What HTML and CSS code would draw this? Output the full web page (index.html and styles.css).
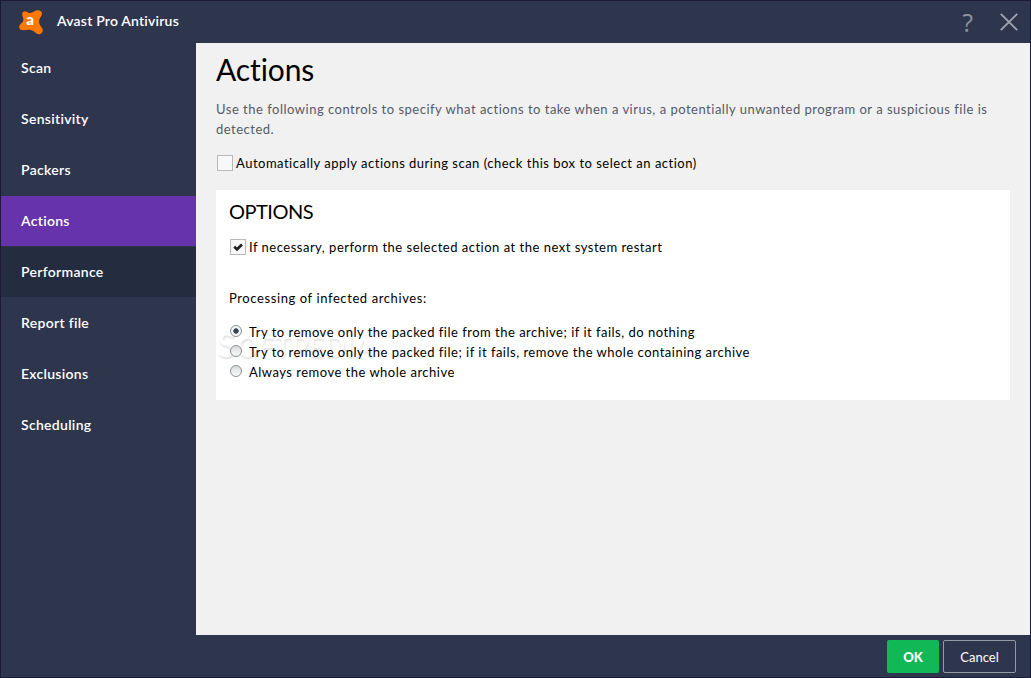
FILE: index.html
```
<!DOCTYPE html>
<html lang="en">

<head>
  <meta charset="utf-8">
  <title>Avast Pro Antivirus</title>
  <link rel="stylesheet" href="styles.css">
</head>

<body>
  <div class="window">
    <header class="titlebar">
      <svg class="logo" width="26" height="26" viewBox="0 0 26 26">
        <path d="M8.800 2.800C11 4.600 13.500 4.300 16.500 2.300C18.500 .8 21.500 .6 23.200 2.500C24.800 4.600 23.800 6.500 22.300 8.500C20.300 11.500 20.600 15 23.500 18.300C26 21 24.600 25 21.200 25.200C18 25.300 17 22.200 13.500 21.200C10.500 20.300 8.500 21 5.500 21.300C1.500 21.600 .2 18 2 15.800C4 13.600 5.800 12.500 5.300 9.500C5 7.500 3.800 6.200 4.300 4.200C4.900 2 7.200 1.600 8.800 2.800Z" fill="#ff7800"/>
        <text class="logo-letter" x="8.300" y="16">a</text>
      </svg>
      <span class="app-name">Avast Pro Antivirus</span>
      <span class="help">?</span>
      <svg class="close" width="18" height="18" viewBox="0 0 18 18">
        <path d="M.8 .8L17.200 17.200M17.200 .8L.8 17.200" stroke="#a1a5b0" stroke-width="1.800"/>
      </svg>
    </header>

    <div class="main">
      <nav class="sidebar">
        <a class="item">Scan</a>
        <a class="item">Sensitivity</a>
        <a class="item">Packers</a>
        <a class="item active">Actions</a>
        <a class="item hover">Performance</a>
        <a class="item">Report file</a>
        <a class="item">Exclusions</a>
        <a class="item">Scheduling</a>
      </nav>

      <section class="content">
        <h1>Actions</h1>
        <p class="intro">Use the following controls to specify what actions to take when a virus, a potentially unwanted program or a suspicious file is<br>detected.</p>
        <label class="check auto"><span class="box"></span>Automatically apply actions during scan (check this box to select an action)</label>

        <div class="panel">
          <h2>OPTIONS</h2>
          <label class="check"><span class="box">
            <svg width="14" height="14" viewBox="0 0 14 14"><path d="M3.200 6.800L6 9.300L11 4.500" fill="none" stroke="#222" stroke-width="2.700"/></svg>
          </span>If necessary, perform the selected action at the next system restart</label>
          <p class="group-title">Processing of infected archives:</p>
          <div class="radios">
            <label class="radio"><span class="dot on"></span>Try to remove only the packed file from the archive; if it fails, do nothing</label>
            <label class="radio"><span class="dot"></span>Try to remove only the packed file; if it fails, remove the whole containing archive</label>
            <label class="radio"><span class="dot"></span>Always remove the whole archive</label>
          </div>
          <div class="watermark">S<small>OFTPEDIA</small></div>
        </div>
      </section>
    </div>

    <footer class="footer">
      <button class="btn ok">OK</button>
      <button class="btn cancel">Cancel</button>
    </footer>
  </div>
</body>

</html>
```
FILE: styles.css
```
* {
  box-sizing: border-box;
}

body {
  margin: 0;
  font-family: Lato, "Open Sans", sans-serif;
  font-size: 13px;
  color: #000;
}

.window {
  display: flex;
  flex-direction: column;
  width: 1031px;
  height: 678px;
  background: #2e364e;
  border: 1px solid #1b1b38;
}

/* title bar */
.titlebar {
  display: flex;
  align-items: center;
  flex: none;
  height: 42px;
  padding: 0 12px 0 17px;
}

.logo {
  margin-right: 13px;
}

.logo-letter {
  font-size: 15px;
  font-weight: 900;
  fill: #fff;
}

.app-name {
  flex: 1;
  padding-bottom: 3px;
  color: #fff;
  font-size: 14px;
  font-weight: 600;
  letter-spacing: 0.2px;
}

.help {
  margin-right: 27px;
  color: #8d92a0;
  font-family: "Open Sans", sans-serif;
  font-size: 25px;
  line-height: 42px;
}

.main {
  display: flex;
  flex: 1;
  min-height: 0;
}

/* left menu */
.sidebar {
  display: flex;
  flex-direction: column;
  gap: 1px;
  width: 195px;
}

.item {
  height: 50px;
  padding-left: 20px;
  line-height: 50px;
  color: #fff;
  font-size: 14px;
  font-weight: 600;
  letter-spacing: 0.3px;
}

.active {
  background: #6633ac;
}

.hover {
  background: #242c3f;
}

/* page */
.content {
  flex: 1;
  padding: 10px 20px 0;
  background: #f1f1f1;
}

h1 {
  margin: 0;
  font-size: 30px;
  font-weight: 400;
  line-height: 32px;
  letter-spacing: -0.1px;
}

.intro {
  margin: 14px 0 0;
  color: #555a68;
  line-height: 20px;
  white-space: nowrap;
  letter-spacing: 0.5px;
}

.check {
  display: flex;
  align-items: center;
  height: 16px;
  padding-left: 1px;
  gap: 3px;
  white-space: nowrap;
  letter-spacing: 0.5px;
}

.auto {
  margin-top: 16px;
}

.box {
  width: 16px;
  height: 16px;
  border: 1px solid #b8b9b8;
  background: #f8f8f8;
}

.box svg {
  display: block;
}

.panel {
  position: relative;
  height: 210px;
  margin-top: 19px;
  padding: 11px 13px 0;
  background: #fff;
}

h2 {
  margin: 0 0 18px;
  font-size: 20px;
  font-weight: 400;
  line-height: 20px;
  letter-spacing: -0.5px;
}

.group-title {
  margin: 33px 0 0;
  line-height: 20px;
  letter-spacing: 0.6px;
}

.radios {
  position: relative;
  z-index: 1;
  margin-top: 14px;
}

.radio {
  display: flex;
  align-items: center;
  gap: 7px;
  height: 20px;
  padding-left: 1px;
  white-space: nowrap;
  letter-spacing: 0.49px;
}

.dot {
  width: 12px;
  height: 12px;
  margin-top: -2px;
  border: 1px solid #8b9094;
  border-radius: 50%;
  background: linear-gradient(#d8dbdd, #fbfbfb);
}

.on {
  background: radial-gradient(circle, #354552 0 2.400px, #f2f5f7 3px);
}

/* faint embossed mark behind the radio buttons */
.watermark {
  position: absolute;
  left: 1px;
  top: 135px;
  font-size: 35px;
  font-weight: 600;
  line-height: 36px;
  color: #fff;
  text-shadow: 1px 2px 2px #e2e2e2;
}

.watermark small {
  font-size: 28px;
}

/* bottom buttons */
.footer {
  display: flex;
  flex: none;
  gap: 4px;
  height: 42px;
  padding: 5px 14px 0 0;
  justify-content: flex-end;
}

.btn {
  height: 33px;
  padding: 0;
  border-radius: 2px;
  color: #fff;
  font-family: inherit;
  font-size: 13px;
}

.ok {
  width: 52px;
  border: 0;
  background: #10b956;
  font-weight: 900;
}

.cancel {
  width: 73px;
  border: 1px solid #9499a6;
  background: none;
}
```
